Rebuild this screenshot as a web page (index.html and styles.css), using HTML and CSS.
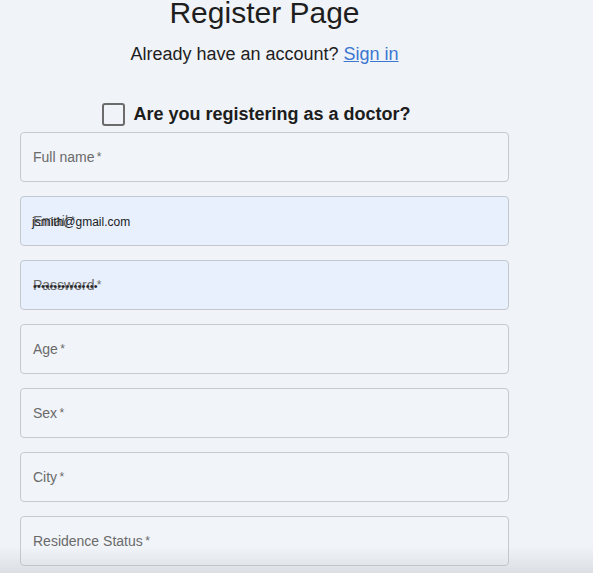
FILE: index.html
```html
<!DOCTYPE html>
<html lang="en">
<head>
<meta charset="utf-8">
<title>Register Page</title>
<link rel="stylesheet" href="styles.css">
</head>
<body>
<main class="page">
  <h1 class="title">Register Page</h1>
  <p class="sub">Already have an account? <a href="#" class="link">Sign in</a></p>
  <div class="doctor-row">
    <span class="checkbox"></span>
    <span class="doctor-label">Are you registering as a doctor?</span>
  </div>
  <form class="fields">
    <div class="field"><span class="label">Full name<span class="req">&thinsp;*</span></span></div>
    <div class="field autofill">
      <span class="label">Email<span class="req">&thinsp;*</span></span>
      <span class="value">jsmith@gmail.com</span>
    </div>
    <div class="field autofill">
      <span class="label">Password<span class="req">&thinsp;*</span></span>
      <span class="dots">&bull;&bull;&bull;&bull;&bull;&bull;&bull;&bull;&bull;&bull;&bull;&bull;&bull;&bull;&bull;&bull;</span>
    </div>
    <div class="field"><span class="label">Age<span class="req">&thinsp;*</span></span></div>
    <div class="field"><span class="label">Sex<span class="req">&thinsp;*</span></span></div>
    <div class="field"><span class="label">City<span class="req">&thinsp;*</span></span></div>
    <div class="field"><span class="label">Residence Status<span class="req">&thinsp;*</span></span></div>
  </form>
</main>
<div class="bottom-shade"></div>
</body>
</html>
```
FILE: styles.css
```css
html, body {
  margin: 0;
  padding: 0;
  background: #f0f3f8;
  font-family: "Liberation Sans", Arial, Helvetica, sans-serif;
  color: #1c1c1c;
  overflow: hidden;
}
.page {
  width: 489px;
  margin-left: 20px;
  display: flex;
  flex-direction: column;
}
.title {
  margin: -2px 0 0 0;
  font-size: 30px;
  line-height: 30px;
  font-weight: normal;
  text-align: center;
  color: #1e1e1e;
}
.sub {
  margin: 15px 0 0 0;
  font-size: 18px;
  line-height: 22px;
  text-align: center;
  color: #1e1e1e;
}
.link {
  color: #3b76d0;
  text-decoration: underline;
}
.doctor-row {
  margin-top: 37px;
  height: 24px;
  display: flex;
  align-items: center;
  justify-content: center;
  gap: 8px;
  padding-right: 16px;
}
.checkbox {
  width: 23px;
  height: 23px;
  box-sizing: border-box;
  border: 2.5px solid #6c6c6c;
  border-radius: 3px;
}
.doctor-label {
  font-size: 18px;
  font-weight: bold;
  line-height: 24px;
  color: #1c1c1c;
}
.fields {
  margin: 6px 0 0 0;
  display: flex;
  flex-direction: column;
  gap: 14px;
}
.field {
  position: relative;
  height: 50px;
  box-sizing: border-box;
  border: 1px solid #c6c9ce;
  border-radius: 4px;
  background: #f1f4f9;
  display: flex;
  align-items: center;
  padding-left: 12px;
}
.field.autofill {
  background: #e8f0fe;
  border-color: #c3c8d0;
}
.label {
  font-size: 14px;
  color: #6a6a6a;
  line-height: 16px;
}
.req {
  font-size: 12px;
  position: relative;
  top: -1px;
}
.value {
  position: absolute;
  left: 11px;
  top: 17px;
  font-size: 12px;
  line-height: 16px;
  color: #202020;
}
.dots {
  position: absolute;
  left: 12px;
  top: 17px;
  font-size: 11px;
  line-height: 16px;
  color: #2a2a2a;
  letter-spacing: 0.2px;
}
.bottom-shade {
  position: fixed;
  left: 0;
  right: 0;
  bottom: 0;
  height: 26px;
  background: linear-gradient(to bottom, rgba(180, 186, 192, 0), rgba(180, 186, 192, 0.35));
  pointer-events: none;
}
```
